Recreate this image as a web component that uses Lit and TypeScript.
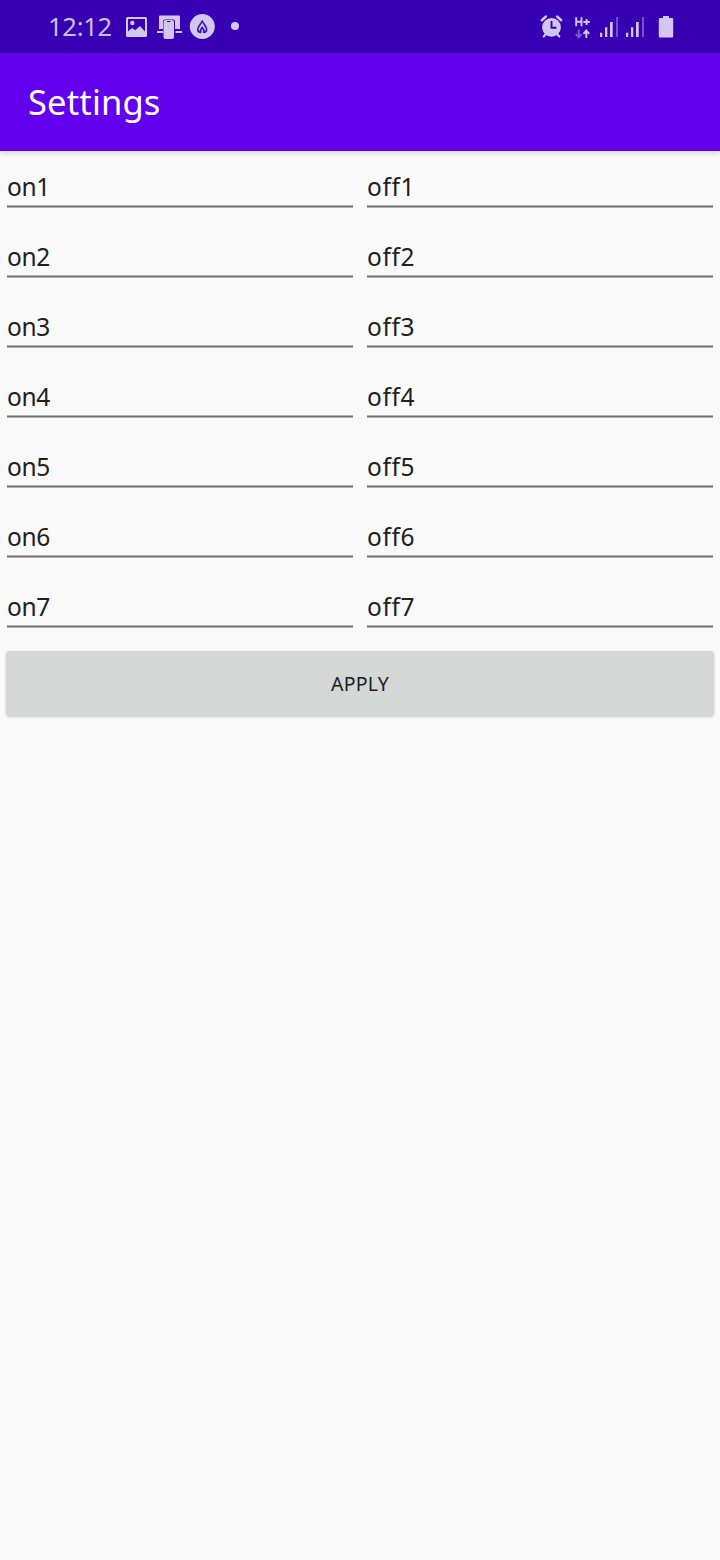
import { LitElement, html, css } from "lit";
import { customElement, state } from "lit/decorators.js";
import { classMap } from "lit/directives/class-map.js";

@customElement("status-bar")
export class StatusBar extends LitElement {
  static styles = css`
    :host { display: block; }
    .bar {
      box-sizing: border-box;
      height: 53px;
      background: #3700b3;
      display: flex;
      justify-content: space-between;
      padding: 0 44px 0 48px;
    }
    .side { display: flex; }
    .time {
      width: 72px;
      font-size: 25.5px;
      line-height: 53px;
      letter-spacing: -0.25px;
      color: #cdbfec;
      white-space: nowrap;
    }
    svg { display: block; fill: #d3c7f0; }
  `;

  render() {
    return html`
      <div class="bar">
        <div class="side">
          <div class="time">12:12</div>
          <svg width="130" height="53" viewBox="120 0 130 53">
            <path fill-rule="evenodd" d="M127.500 17h18q1.500 0 1.500 1.500v17q0 1.500-1.500 1.500h-18q-1.500 0-1.500-1.500v-17q0-1.500 1.500-1.500zm.5 2v12.500l4.200-3.500 3 2.300 4.800-4.300 5 5.500V19z"/>
            <circle cx="132.300" cy="23" r="2.200"/>
            <path d="M160 15.500h19q1 0 1 1V29h-5v-7.500q0-2-2-2h-8q-2 0-2 2V29h-4V16.500q0-1 1-1z"/>
            <path d="M157 31h6v2h-6zm18.500 0h6.500v2h-6.500z"/>
            <path fill-rule="evenodd" d="M165.500 20h6.500q2 0 2 2v15q0 2-2 2h-6.500q-2 0-2-2V22q0-2 2-2zm1.500 1v1h3.500v-1z"/>
            <circle cx="202.300" cy="26.500" r="12.500"/>
            <path d="M202.200 21c-1.400 3.200-4.400 5.500-4.400 8.400 0 1.900 1.100 2.900 2.900 2.900-.6-1.900.4-3.700 1.500-4.900 1.100 1.200 2.100 3 1.500 4.900 1.800 0 2.900-1 2.900-2.900 0-2.900-3-5.200-4.400-8.400z" fill="none" stroke="#3f16ae" stroke-width="1.700" stroke-linejoin="round"/>
            <circle cx="235" cy="26" r="4"/>
          </svg>
        </div>
        <svg width="141" height="53" viewBox="535 0 141 53">
          <g fill="none" stroke="#d3c7f0" stroke-linecap="round">
            <path d="M541.800 20.200l4-3.600m15.400 3.600l-4-3.600" stroke-width="2.500"/>
            <path d="M545.500 34.500l-1.800 2m13.800-2l1.800 2" stroke-width="2.200"/>
          </g>
          <circle cx="551.500" cy="27.300" r="9.400"/>
          <path d="M551.500 21v6.800h5" fill="none" stroke="#3700b3" stroke-width="1.900"/>
          <g fill="none" stroke="#d3c7f0" stroke-width="1.900">
            <path d="M576.200 17.300v9m5.300-9v9m-5.300-4.500h5.300m1.800 .2h6.500m-3.200-3v6"/>
            <path d="M578.700 29.500v7.800m-2.900-3.300l2.900 3.300 2.900-3.300" opacity=".45"/>
            <path d="M586.300 38v-7.500m-2.900 3.300l2.900-3.300 2.900 3.300"/>
          </g>
          <path d="M600 32.700h2.200V37H600zm5-5.400h2.300V37H605zm5-5.300h2.700v15H610zm16 10.700h2.200V37H626zm5-5.400h2.300V37H631zm5-5.300h2.700v15H636z"/>
          <path d="M616 17h2v20h-2zm26 0h2v20h-2z" opacity=".4"/>
          <path d="M663 16h6v2h3q1.200 0 1.200 1.200v17q0 1.300-1.200 1.300h-12q-1.200 0-1.200-1.300v-17q0-1.200 1.200-1.200h3z"/>
        </svg>
      </div>
    `;
  }
}

@customElement("app-root")
export class AppRoot extends LitElement {
  static styles = css`
    :host {
      display: block;
      min-height: 1560px;
      background: #fafafa;
      font-family: "Noto Sans", sans-serif;
    }
    .toolbar {
      box-sizing: border-box;
      height: 98px;
      padding-left: 28px;
      background: #6200ee;
      color: #fff;
      font-size: 34.5px;
      line-height: 98px;
      letter-spacing: 0.15px;
      box-shadow: 0 2px 5px rgba(70, 90, 40, 0.22);
    }
    .grid {
      display: grid;
      grid-template-columns: 1fr 1fr;
      column-gap: 14px;
      row-gap: 13px;
      padding: 14px 7px 0;
    }
    .field {
      box-sizing: border-box;
      height: 57px;
      padding-top: 5px;
      color: #202020;
      font-size: 24.5px;
      line-height: 34px;
      white-space: nowrap;
    }
    .label { height: 35px; letter-spacing: -0.4px; }
    .label.off { letter-spacing: 0.6px; }
    .line {
      height: 1px;
      background: #707070;
      border-top: 1px solid #b2b2b2;
      border-bottom: 1px solid #b2b2b2;
    }
    .apply {
      display: block;
      width: 708px;
      height: 65px;
      margin: 9px 6px 0;
      padding: 0;
      border: 0;
      border-radius: 4px;
      background: #d5d7d6;
      color: #202020;
      font: 19.5px/65px "Noto Sans", sans-serif;
      letter-spacing: 0.3px;
      box-shadow: 0 1px 3px rgba(0, 0, 0, 0.2);
    }
  `;

  @state() private rows = [1, 2, 3, 4, 5, 6, 7];

  private field(kind: "on" | "off", n: number) {
    return html`
      <div class="field">
        <div class=${classMap({ label: true, off: kind === "off" })}>${kind}${n}</div>
        <div class="line"></div>
      </div>
    `;
  }

  render() {
    return html`
      <status-bar></status-bar>
      <div class="toolbar">Settings</div>
      <div class="grid">
        ${this.rows.map((n) => html`${this.field("on", n)}${this.field("off", n)}`)}
      </div>
      <button class="apply">APPLY</button>
    `;
  }
}
